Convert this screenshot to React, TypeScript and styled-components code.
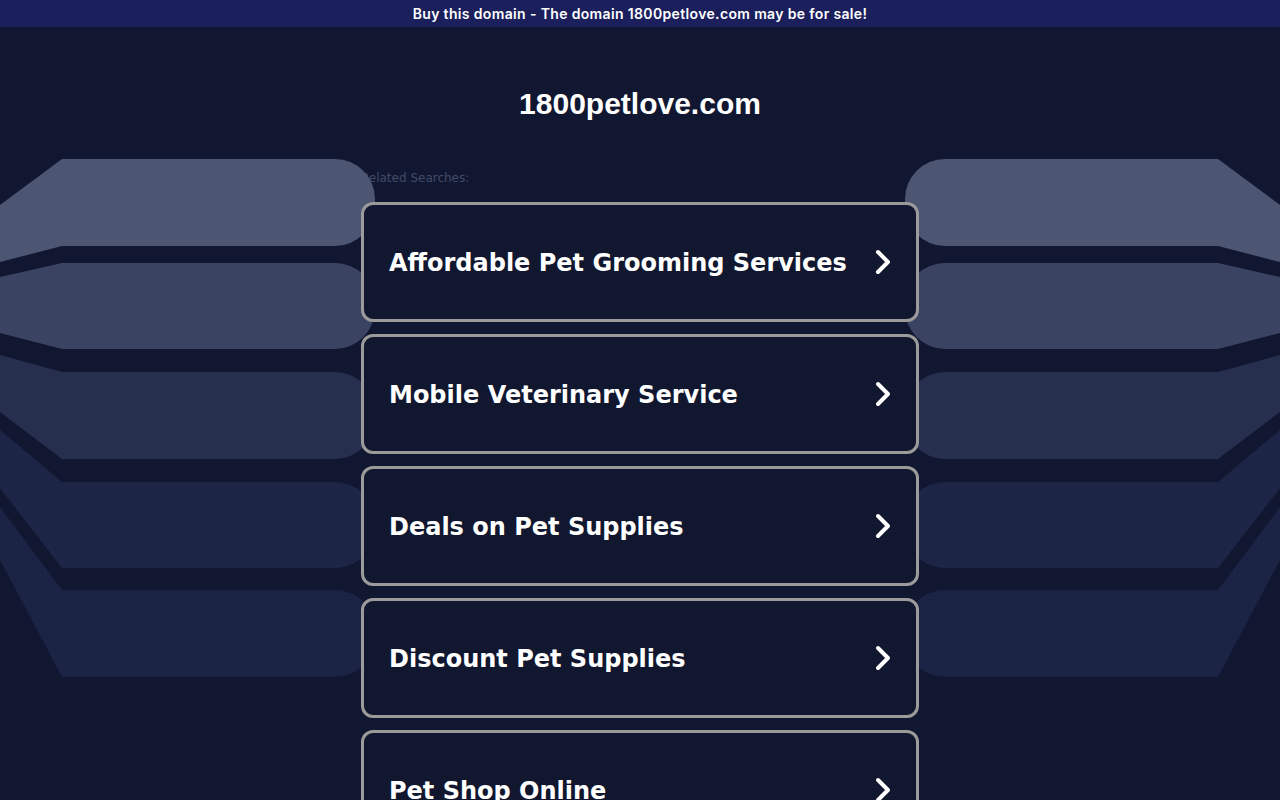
import styled, { createGlobalStyle } from 'styled-components'

const GlobalStyle = createGlobalStyle`
  html, body {
    margin: 0;
    padding: 0;
    background: #111731;
  }
  * {
    box-sizing: border-box;
  }
`

const Page = styled.div`
  position: relative;
  min-height: 100vh;
  overflow: hidden;
  background: #111731;
`

const Backdrop = styled.svg`
  position: absolute;
  top: 0;
  left: 0;
  z-index: 1;
  pointer-events: none;
`

const TopBar = styled.div`
  position: relative;
  z-index: 2;
  height: 27px;
  line-height: 27px;
  background: #1b1f5c;
  color: #ffffff;
  text-align: center;
  font-family: Inter, 'Noto Sans', sans-serif;
  font-weight: 600;
  font-size: 14px;
  letter-spacing: 0.35px;
`

const Title = styled.h1`
  position: relative;
  z-index: 2;
  margin: 60px 0 0;
  height: 34px;
  line-height: 34px;
  text-align: center;
  color: #ffffff;
  font-family: 'Liberation Sans', Arial, sans-serif;
  font-weight: 700;
  font-size: 30px;
`

const Column = styled.div`
  width: 558px;
  margin: 0 auto;
`

const Label = styled.div`
  position: relative;
  z-index: 0;
  margin-top: 50px;
  height: 14px;
  line-height: 14px;
  color: #414a68;
  font-family: 'DejaVu Sans', Verdana, sans-serif;
  font-size: 12px;
`

const List = styled.div`
  position: relative;
  z-index: 2;
  display: flex;
  flex-direction: column;
  gap: 12px;
  margin-top: 17px;
`

const Card = styled.a`
  display: flex;
  align-items: center;
  justify-content: space-between;
  height: 120px;
  padding: 2px 24px 0 25px;
  border: 3px solid #9b9b9b;
  border-radius: 12px;
  background: #11172f;
  color: #ffffff;
  text-decoration: none;
  font-family: 'DejaVu Sans', Verdana, sans-serif;
  font-weight: 700;
  font-size: 24px;
  cursor: pointer;
`

const Chevron = styled.svg`
  flex: none;
  width: 18px;
  height: 28px;
  margin-top: -2px;
`

type Band = { topL: number; top: number; bottom: number; botL: number; color: string; dotted?: boolean }

const bands: Band[] = [
  { topL: 205, top: 159, bottom: 246, botL: 262, color: '#4c5673' },
  { topL: 277, top: 263, bottom: 349, botL: 333, color: '#3a4361' },
  { topL: 355, top: 372, bottom: 459, botL: 412, color: '#272f4e' },
  { topL: 430, top: 482, bottom: 568, botL: 488, color: '#1d2547', dotted: true },
  { topL: 507, top: 590, bottom: 677, botL: 560, color: '#1b2345', dotted: true },
]

// one band of the backdrop, drawn for the left side and mirrored for the right
const bandPath = ({ topL, top, bottom, botL }: Band) => {
  const end = 375
  const r = 40
  return [
    `M0 ${topL}`,
    `L62 ${top}`,
    `L${end - r} ${top}`,
    `A${r} ${r} 0 0 1 ${end} ${top + r}`,
    `L${end} ${bottom - r}`,
    `A${r} ${r} 0 0 1 ${end - r} ${bottom}`,
    `L62 ${bottom}`,
    `L0 ${botL}`,
    'Z',
  ].join(' ')
}

const Bands = () => (
  <>
    {bands.map((b, i) => (
      <g key={i}>
        <path d={bandPath(b)} fill={b.color} />
        {b.dotted && <path d={bandPath(b)} fill='url(#dots)' />}
      </g>
    ))}
  </>
)

const searches = [
  'Affordable Pet Grooming Services',
  'Mobile Veterinary Service',
  'Deals on Pet Supplies',
  'Discount Pet Supplies',
  'Pet Shop Online',
]

const App = () => {
  return (
    <>
      <GlobalStyle />
      <Page>
        <Backdrop width='1280' height='800' viewBox='0 0 1280 800'>
          <defs>
            <pattern id='dots' width='4' height='4' patternUnits='userSpaceOnUse'>
              <rect x='1' y='1' width='1' height='1' fill='#2c3660' opacity='0.35' />
            </pattern>
          </defs>
          <Bands />
          <g transform='translate(1280 0) scale(-1 1)'>
            <Bands />
          </g>
        </Backdrop>
        <TopBar>Buy this domain - The domain 1800petlove.com may be for sale!</TopBar>
        <Title>1800petlove.com</Title>
        <Column>
          <Label>Related Searches:</Label>
          <List>
            {searches.map((s) => (
              <Card key={s}>
                <span>{s}</span>
                <Chevron viewBox='0 0 18 28'>
                  <polyline
                    points='4,4 14,14 4,24'
                    fill='none'
                    stroke='#ffffff'
                    strokeWidth='4'
                    strokeLinecap='round'
                    strokeLinejoin='round'
                  />
                </Chevron>
              </Card>
            ))}
          </List>
        </Column>
      </Page>
    </>
  )
}

export default App
